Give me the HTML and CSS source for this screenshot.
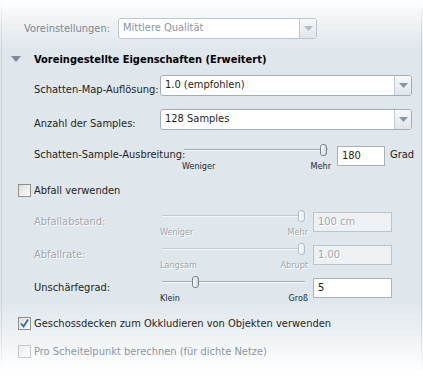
FILE: index.html
```html
<!DOCTYPE html>
<html>
  <head>
    <meta charset="utf-8" />
    <title>Schatten-Eigenschaften</title>
    <link rel="stylesheet" href="styles.css">
  </head>
  <body>
    <div class="panel">
      <div class="preset">
        <span class="preset-label">Voreinstellungen:</span>
        <div class="select select-preset disabled">
          <span class="select-value">Mittlere Qualität</span>
          <span class="select-btn"><svg width="9" height="5" viewBox="0 0 9 5"><path d="M0 0h9L4.5 5z" /></svg></span>
        </div>
      </div>

      <div class="section-head">
        <svg class="twisty" width="10" height="6" viewBox="0 0 10 6"><path d="M0 0h10L5 6z" /></svg>
        <h2>Voreingestellte Eigenschaften (Erweitert)</h2>
      </div>

      <div class="field field-first">
        <label>Schatten-Map-Auflösung:</label>
        <div class="select select-wide">
          <span class="select-value">1.0 (empfohlen)</span>
          <span class="select-btn"><svg width="9" height="5" viewBox="0 0 9 5"><path d="M0 0h9L4.5 5z" /></svg></span>
        </div>
      </div>

      <div class="field field-second">
        <label>Anzahl der Samples:</label>
        <div class="select select-wide">
          <span class="select-value">128 Samples</span>
          <span class="select-btn"><svg width="9" height="5" viewBox="0 0 9 5"><path d="M0 0h9L4.5 5z" /></svg></span>
        </div>
      </div>

      <div class="slider-row spread">
        <label class="long">Schatten-Sample-Ausbreitung:</label>
        <div class="slider slider-spread">
          <div class="track"></div>
          <div class="thumb" style="left: 138px"></div>
          <div class="ticks"><span>Weniger</span><span>Mehr</span></div>
        </div>
        <div class="input input-short">180</div>
        <span class="unit">Grad</span>
      </div>

      <div class="check check-falloff">
        <span class="box"></span>
        <span>Abfall verwenden</span>
      </div>

      <div class="slider-row disabled first-falloff">
        <label>Abfallabstand:</label>
        <div class="slider">
          <div class="track"></div>
          <div class="thumb" style="left: 138px"></div>
          <div class="ticks"><span>Weniger</span><span>Mehr</span></div>
        </div>
        <div class="input">100 cm</div>
      </div>

      <div class="slider-row disabled">
        <label>Abfallrate:</label>
        <div class="slider">
          <div class="track"></div>
          <div class="thumb" style="left: 138px"></div>
          <div class="ticks"><span>Langsam</span><span>Abrupt</span></div>
        </div>
        <div class="input">1.00</div>
      </div>

      <div class="slider-row">
        <label>Unschärfegrad:</label>
        <div class="slider">
          <div class="track"></div>
          <div class="thumb" style="left: 32px"></div>
          <div class="ticks"><span>Klein</span><span>Groß</span></div>
        </div>
        <div class="input">5</div>
      </div>

      <div class="check check-floors">
        <span class="box checked"><svg width="11" height="11" viewBox="0 0 11 11"><path d="M2 5.5l2.5 3L9 1.5" /></svg></span>
        <span>Geschossdecken zum Okkludieren von Objekten verwenden</span>
      </div>

      <div class="check check-vertex disabled">
        <span class="box"></span>
        <span>Pro Scheitelpunkt berechnen (für dichte Netze)</span>
      </div>
    </div>
  </body>
</html>
```

FILE: styles.css
```css
body {
  margin: 0;
  width: 423px;
  height: 385px;
  overflow: hidden;
  position: relative;
  font-family: "DejaVu Sans Condensed", "Liberation Sans", sans-serif;
  font-size: 11px;
  color: #1e1e1e;
  background: linear-gradient(to bottom, #ffffff 0, #f1f4f6 20px, #dfe6ec 50px, #dfe6ec 300px, #f2f5f7 345px, #ffffff 372px);
}

/* faint window edges, fading out at top and bottom */
body::before {
  content: '';
  position: absolute;
  top: 0;
  bottom: 0;
  left: 1px;
  right: 1px;
  border-left: 1px solid #c9d3dc;
  border-right: 1px solid #c9d3dc;
  -webkit-mask-image: linear-gradient(to bottom, transparent 0, #000 50px, #000 310px, transparent 370px);
  mask-image: linear-gradient(to bottom, transparent 0, #000 50px, #000 310px, transparent 370px);
  pointer-events: none;
}

.panel {
  padding-top: 18px;
}

.preset {
  display: flex;
  align-items: center;
  padding-left: 24px;
  height: 21px;
}

.preset-label {
  width: 94px;
  color: #7d8795;
}

.select {
  display: flex;
  box-sizing: border-box;
  height: 21px;
  border: 1px solid #a3adb7;
  border-radius: 3px;
  background: #fff;
}

.select-preset {
  width: 199px;
}

.select-wide {
  width: 252px;
}

.select-value {
  flex: 1;
  padding-left: 4px;
  line-height: 18px;
}

.select-btn {
  width: 16px;
  border-left: 1px solid #c3cbd3;
  border-radius: 0 2px 2px 0;
  background: linear-gradient(to bottom, #f7f9fa, #dfe5ea);
  display: flex;
  align-items: center;
  justify-content: center;
}

.select-btn path {
  fill: #8795a4;
}

.select.disabled {
  border-color: #bdc6ce;
}

.select.disabled .select-value {
  color: #8b94a0;
}

.select.disabled .select-btn path {
  fill: #b3bdc7;
}

.section-head {
  display: flex;
  align-items: center;
  height: 16px;
  margin-top: 12px;
  padding-left: 11px;
}

.twisty {
  margin-right: 13px;
}

.twisty path {
  fill: #7c8a99;
}

h2 {
  margin: 0;
  font-size: 11px;
  font-weight: bold;
  color: #000;
}

.field {
  display: flex;
  align-items: flex-start;
  padding-left: 34px;
  height: 21px;
}

.field label {
  width: 126px;
  padding-top: 8px;
  line-height: 13px;
  white-space: nowrap;
}

.field-first {
  margin-top: 8px;
}

.field-second {
  margin-top: 13px;
}

.slider-row {
  display: flex;
  align-items: flex-start;
  padding-left: 34px;
  margin-top: 5px;
  height: 28px;
}

.slider-row label {
  width: 126px;
  padding-top: 4px;
  line-height: 16px;
  white-space: nowrap;
}

.slider-row.spread {
  margin-top: 14px;
}

.slider-row.first-falloff {
  margin-top: 13px;
}

.slider-row label.long {
  width: 148px;
  padding-top: 3px;
}

.slider {
  position: relative;
  width: 148px;
  height: 28px;
}

.slider-spread {
  width: 149px;
}

.track {
  margin: 5px 3px 0 2px;
  height: 1px;
  background: #9eacb9;
  border-bottom: 1px solid #f6f8fa;
}

.thumb {
  position: absolute;
  top: 0;
  box-sizing: border-box;
  width: 7px;
  height: 12px;
  border: 1px solid #76838f;
  border-radius: 3px;
  background: linear-gradient(to right, #ffffff, #cfd7de);
}

.ticks {
  display: flex;
  justify-content: space-between;
  margin-top: 10px;
  font-size: 9px;
  line-height: 11px;
  color: #1e2a36;
}

.input {
  box-sizing: border-box;
  width: 79px;
  height: 20px;
  margin: 2px 0 0 5px;
  padding-left: 4px;
  border: 1px solid #a9b3bd;
  background: #fff;
  line-height: 18px;
}

.input-short {
  width: 48px;
  margin-left: 6px;
}

.unit {
  margin-left: 5px;
  padding-top: 3px;
  line-height: 16px;
}

.slider-row.disabled label,
.slider-row.disabled .ticks,
.slider-row.disabled .input {
  color: #a2a7ac;
  text-shadow: 1px 1px 0 #fff;
}

.slider-row.disabled .track {
  background: #c3ccd4;
}

.slider-row.disabled .thumb {
  border-color: #b4bdc5;
  background: linear-gradient(to right, #ffffff, #e6ebef);
}

.slider-row.disabled .input {
  background: #eef1f3;
  border-color: #bcc4cb;
}

.check {
  display: flex;
  align-items: center;
  gap: 3px;
  padding-left: 18px;
  height: 13px;
  line-height: 13px;
}

.check-falloff {
  margin-top: 12px;
}

.check-floors {
  margin-top: 13px;
}

.check-vertex {
  margin-top: 15px;
}

.box {
  box-sizing: border-box;
  width: 13px;
  height: 13px;
  border: 1px solid #8e8f8f;
  background: linear-gradient(135deg, #dcdcdc, #fdfdfd);
  display: flex;
  align-items: center;
  justify-content: center;
}

.box path {
  fill: none;
  stroke: #3a66a8;
  stroke-width: 1.8;
}

.check.disabled {
  color: #8e96a0;
}

.check.disabled .box {
  border-color: #c3c8cc;
  background: linear-gradient(135deg, #eceeef, #fbfbfb);
}
```
